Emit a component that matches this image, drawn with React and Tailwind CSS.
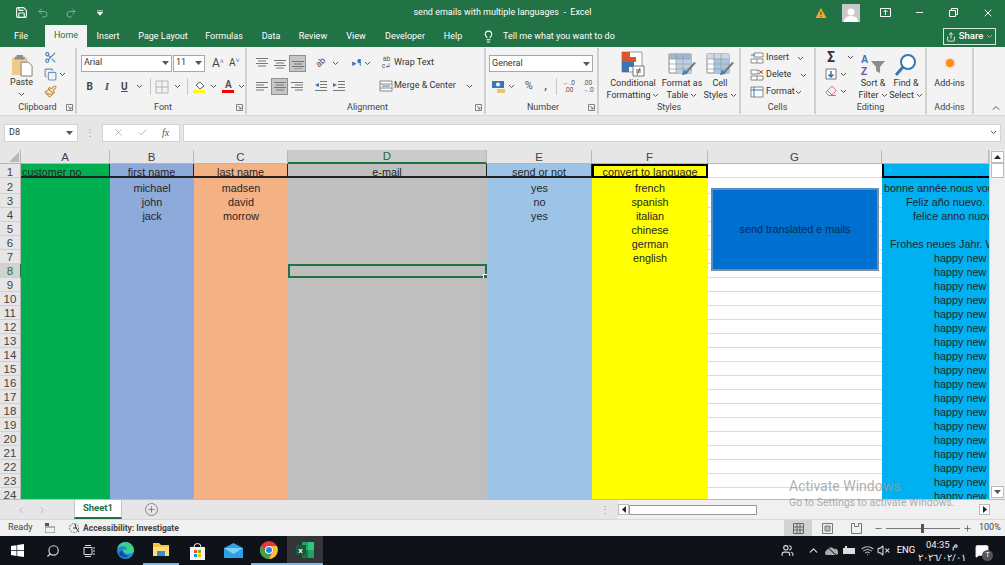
import React from "react";
import { Save, Undo2, Redo2, Scissors, Copy, Paintbrush, Search, ChevronUp, Lightbulb, Share, X, Minus, Check, Plus, Eraser, ChevronLeft, ChevronRight, Wifi, VolumeX, Users, MessageSquare } from "lucide-react";

const Chev = ({ className = "" }) => (
  <svg width="7" height="5" viewBox="0 0 7 5" className={"shrink-0 " + className}><path d="M1 1l2.500 2.500L6 1" fill="none" stroke="#555" strokeWidth="1" /></svg>
);
const Tri = () => <svg width="7" height="4" viewBox="0 0 7 4" className="shrink-0"><path d="M0 0h7L3.500 4z" fill="#555" /></svg>;
const Lines = ({ kind = "c", y = 0 }) => {
  const l = kind === "l" ? [[1, 13], [1, 9], [1, 13], [1, 9]] : kind === "r" ? [[1, 13], [5, 13], [1, 13], [5, 13]] : [[1, 13], [3, 11], [1, 13], [3, 11]];
  return <svg width="14" height="12" viewBox="0 0 14 12">{l.map((p, i) => <path key={i} d={`M${p[0]} ${2.5 + i * 2.5 + y}H${p[1]}`} stroke="#777" strokeWidth="1" />)}</svg>;
};
const Launcher = () => <svg width="7" height="7" viewBox="0 0 7 7" className="shrink-0"><path d="M.5 6.500V.5h6v6zM2 2l3 3M5 3v2H3" fill="none" stroke="#666" strokeWidth=".8" /></svg>;
const Sep = () => <div className="w-px h-[17px] bg-[#c6c6c6] shrink-0" />;

function Label({ children, launcher }) {
  return (
    <div className="h-[13px] shrink-0 relative flex items-center justify-center text-[9px] text-[#444] leading-none">
      {children}
      {launcher && <span className="absolute right-[2px] top-[3px]"><Launcher /></span>}
    </div>
  );
}

const GridIcon = ({ c = "#999" }) => <svg width="14" height="14" viewBox="0 0 14 14"><path d="M1 1h12v12H1zM1 7h12M7 1v12" fill="none" stroke={c} /></svg>;

const TableIcon = ({ head = "#9fb6cf", fill = "#bcd0e6" }) => (
  <svg width="30" height="24" viewBox="0 0 30 24">
    <path d="M2 1h22v19H2z" fill="#fff" stroke="#8a8a8a" />
    <path d="M2 1h22v5H2z" fill={head} />
    <path d="M9 6h15v14H9z" fill={fill} />
    <path d="M2 6h22M2 11h22M2 16h22M9 1v19M16 1v19" stroke="#9a9a9a" strokeWidth=".7" />
    <path d="M27 9l-8 9-2-1-2 5 5-1 1-2 8-9z" fill="#7a7a7a" />
    <path d="M15 22l2-5 3 3z" fill="#3b82c4" />
  </svg>
);

function BigBtn({ icon, l1, l2, className }) {
  return (
    <div className={"flex flex-col items-center shrink-0 " + className}>
      <div className="h-[29px] flex items-end justify-center">{icon}</div>
      <div className="h-[12px] flex items-center text-[9px] leading-none text-[#333] whitespace-nowrap">{l1}</div>
      <div className="h-[12px] flex items-center gap-[2px] text-[9px] leading-none text-[#333] whitespace-nowrap">{l2}<Chev /></div>
    </div>
  );
}

function Ribbon() {
  return (
    <div className="h-[69px] bg-[#f3f3f3] flex border-b border-[#d8d8d8] shrink-0 font-['Roboto',sans-serif]">
      {/* Clipboard */}
      <div className="w-[77px] shrink-0 border-r-2 border-[#cfcfcf] my-[1px] flex flex-col">
        <div className="h-[53px] shrink-0 flex">
          <div className="w-[42px] flex flex-col items-center pl-[1px] pt-[5px]">
            <svg width="22" height="24" viewBox="0 0 24 26">
              <path d="M1 5h17v19H1z" fill="#eecb8c" />
              <path d="M6 2h7v2h2v3H4V4h2z" fill="#8c8c8c" />
              <path d="M11 10h8l4 4v11H11z" fill="#fff" stroke="#777" />
            </svg>
            <span className="text-[9px] leading-none text-[#333] mt-[1px]">Paste</span>
            <Chev className="mt-[5px]" />
          </div>
          <div className="flex flex-col gap-[4px] items-center w-[16px] mt-[3px]">
            <Scissors size={13} color="#4a7fb5" />
            <Copy size={13} color="#6d8fb3" />
            <Paintbrush size={13} color="#c98a2f" />
          </div>
          <Chev className="mt-[24px] ml-[1px]" />
        </div>
        <Label launcher>Clipboard</Label>
      </div>
      {/* Font */}
      <div className="w-[170px] shrink-0 border-r-2 border-[#cfcfcf] my-[1px] flex flex-col pl-[4px]">
        <div className="h-[53px] shrink-0 flex flex-col">
          <div className="flex items-center h-[18px] mt-[6px]">
            <div className="w-[91px] h-[17px] bg-white border border-[#a8a8a8] flex items-center justify-between px-[2px] text-[9px] text-[#333]">Arial<Tri /></div>
            <div className="w-[32px] h-[17px] ml-[1px] bg-white border border-[#a8a8a8] flex items-center justify-between px-[2px] text-[9px] text-[#333]">11<Tri /></div>
            <span className="ml-[7px] text-[12px] leading-none text-[#444]">A<sup className="text-[7px] text-[#3a76b4]">˄</sup></span>
            <span className="ml-[5px] text-[10px] leading-none text-[#444]">A<sup className="text-[7px] text-[#3a76b4]">˅</sup></span>
          </div>
          <div className="flex items-center h-[17px] mt-[6px]">
            <span className="w-[18px] text-center text-[10px] font-bold text-[#444]">B</span>
            <span className="w-[18px] text-center text-[10px] italic font-['Liberation_Serif',serif] font-bold text-[#444]">I</span>
            <span className="w-[18px] text-center text-[10px] underline font-bold text-[#444]">U</span>
            <Chev className="ml-[3px] mr-[7px]" />
            <Sep />
            <div className="ml-[4px] w-[14px]"><GridIcon c="#b5b5b5" /></div>
            <Chev className="ml-[5px] mr-[6px]" />
            <Sep />
            <div className="ml-[3px] w-[16px] flex flex-col items-center">
              <svg width="12" height="9" viewBox="0 0 12 9"><path d="M3 4l4-3 4 4-4 3z" fill="#fff" stroke="#666" /></svg>
              <div className="w-[12px] h-[3px] bg-[#ffff00]" />
            </div>
            <Chev className="ml-[3px] mr-[5px]" />
            <div className="w-[14px] flex flex-col items-center">
              <span className="text-[10px] leading-[9px] font-bold text-[#555]">A</span>
              <div className="w-[12px] h-[3px] mt-[1px] bg-[#ff0000]" />
            </div>
            <Chev className="ml-[3px]" />
          </div>
        </div>
        <Label launcher>Font</Label>
      </div>
      {/* Alignment */}
      <div className="w-[239px] shrink-0 border-r-2 border-[#cfcfcf] my-[1px] flex flex-col pl-[4px]">
        <div className="h-[53px] shrink-0 flex">
          <div className="flex flex-col w-[129px]">
            <div className="flex items-center h-[18px] mt-[6px]">
              <div className="w-[18px] ml-[2px] flex justify-center"><Lines y={-1} /></div>
              <div className="w-[18px] flex justify-center"><Lines y={1} /></div>
              <div className="w-[17px] h-[17px] bg-[#c6c6c6] border border-[#8f8f8f] flex items-center justify-center"><Lines y={2} /></div>
              <div className="w-[22px] ml-[4px] flex justify-center text-[9px] text-[#555] -rotate-45">ab</div>
              <Chev />
              <div className="ml-[13px] text-[9px] text-[#3a76b4] leading-none">▸¶</div>
              <Chev className="ml-[3px]" />
            </div>
            <div className="flex items-center h-[18px] mt-[5px]">
              <div className="w-[18px] ml-[2px] flex justify-center"><Lines kind="l" /></div>
              <div className="w-[17px] h-[17px] bg-[#c6c6c6] border border-[#8f8f8f] flex items-center justify-center"><Lines /></div>
              <div className="w-[18px] flex justify-center"><Lines kind="r" /></div>
              <div className="w-[18px] ml-[6px] flex justify-center">
                <svg width="14" height="12" viewBox="0 0 14 12"><path d="M6 1.500h7M6 4.500h7M6 7.500h7M1 10.500h12" stroke="#777" /><path d="M5 3L1 5l4 2z" fill="#3a76b4" /></svg>
              </div>
              <div className="w-[18px] flex justify-center">
                <svg width="14" height="12" viewBox="0 0 14 12"><path d="M6 1.500h7M6 4.500h7M6 7.500h7M1 10.500h12" stroke="#777" /><path d="M1 3l4 2-4 2z" fill="#3a76b4" /></svg>
              </div>
            </div>
          </div>
          <div className="flex flex-col">
            <div className="flex items-center h-[18px] mt-[6px]">
              <div className="w-[13px] text-[7px] leading-[7px] text-[#555] text-center">ab<br />c<span className="text-[#3a76b4]">↲</span></div>
              <span className="ml-[1px] text-[9px] text-[#333] whitespace-nowrap">Wrap Text</span>
            </div>
            <div className="flex items-center h-[18px] mt-[5px] -ml-[1px]">
              <svg width="14" height="12" viewBox="0 0 14 12" className="shrink-0"><path d="M1 1h12v10H1zM1 4h12M1 8h12" fill="#fff" stroke="#888" /><path d="M3 6h8" stroke="#3a76b4" /></svg>
              <span className="ml-[1px] w-[69px] text-[9px] text-[#333] whitespace-nowrap">Merge &amp; Center</span>
              <Chev className="ml-[3px]" />
            </div>
          </div>
        </div>
        <Label launcher>Alignment</Label>
      </div>
      {/* Number */}
      <div className="w-[113px] shrink-0 border-r-2 border-[#cfcfcf] my-[1px] flex flex-col pl-[3px]">
        <div className="h-[53px] shrink-0 flex flex-col">
          <div className="w-[104px] h-[17px] mt-[7px] bg-white border border-[#a8a8a8] flex items-center justify-between px-[2px] text-[9px] text-[#333]">General<Tri /></div>
          <div className="flex items-center h-[17px] mt-[6px] pl-[3px]">
            <svg width="13" height="14" viewBox="0 0 13 14" className="shrink-0"><path d="M0 1h12v7H0z" fill="#3a76b4" /><circle cx="6" cy="4.500" r="2" fill="#fff" /><path d="M5 9h8v4H5z" fill="#e8c46a" /></svg>
            <Chev className="ml-[3px]" />
            <span className="ml-[5px] w-[18px] text-center text-[11px] text-[#555]">%</span>
            <span className="ml-[1px] w-[14px] text-center text-[11px] font-bold text-[#555]">,</span>
            <div className="ml-[3px]"><Sep /></div>
            <span className="ml-[3px] w-[19px] text-[6.5px] leading-[7px] text-[#555] text-center"><span className="text-[#3a76b4]">←</span>.0<br />.00</span>
            <span className="w-[19px] text-[6.5px] leading-[7px] text-[#555] text-center">.00<br /><span className="text-[#3a76b4]">→</span>.0</span>
          </div>
        </div>
        <Label launcher>Number</Label>
      </div>
      {/* Styles */}
      <div className="w-[142px] shrink-0 border-r-2 border-[#cfcfcf] my-[1px] flex flex-col">
        <div className="h-[53px] shrink-0 flex">
          <BigBtn className="w-[68px]" l1="Conditional" l2="Formatting" icon={
            <svg width="24" height="26" viewBox="0 0 24 26">
              <path d="M1 1h20v20H1z" fill="#fff" stroke="#999" />
              <path d="M1 1h8v5H1z" fill="#d9552c" /><path d="M1 6h14v5H1z" fill="#d9552c" /><path d="M1 11h12v5H1z" fill="#3a76b4" /><path d="M1 16h7v5H1z" fill="#3a76b4" />
              <path d="M12 15h11v10H12z" fill="#fff" stroke="#777" /><path d="M15 19h5M15 21h5M19 17l-3 7" stroke="#444" strokeWidth=".8" />
            </svg>} />
          <BigBtn className="w-[30px]" l1="Format as" l2="Table" icon={<TableIcon />} />
          <BigBtn className="w-[46px]" l1="Cell" l2="Styles" icon={<TableIcon head="#cfd8e3" fill="#a9c6e6" />} />
        </div>
        <Label>Styles</Label>
      </div>
      {/* Cells */}
      <div className="w-[75px] shrink-0 border-r-2 border-[#cfcfcf] my-[1px] flex flex-col pl-[9px]">
        <div className="h-[53px] shrink-0 flex flex-col pt-[3px] gap-[3px]">
          <div className="flex items-center h-[14px]">
            <svg width="14" height="12" viewBox="0 0 14 12" className="shrink-0"><path d="M4 1h9v4H4zM1 7h12v4H1zM7 7v4" fill="#fff" stroke="#888" /><path d="M1 3h4" stroke="#3a76b4" /></svg>
            <span className="ml-[2px] text-[9px] text-[#333] w-[31px]">Insert</span><Chev />
          </div>
          <div className="flex items-center h-[14px]">
            <svg width="14" height="12" viewBox="0 0 14 12" className="shrink-0"><path d="M1 1h7v4H1zM1 7h12v4H1zM7 7v4" fill="#fff" stroke="#888" /><path d="M9 1l4 4M13 1l-4 4" stroke="#d9452c" /></svg>
            <span className="ml-[2px] text-[9px] text-[#333] w-[34px]">Delete</span><Chev />
          </div>
          <div className="flex items-center h-[14px]">
            <svg width="14" height="12" viewBox="0 0 14 12" className="shrink-0"><path d="M1 1h12v10H1z" fill="#fff" stroke="#888" /><path d="M4 1v10M1 4h12" stroke="#3a76b4" /></svg>
            <span className="ml-[2px] text-[9px] text-[#333] w-[29px]">Format</span><Chev />
          </div>
        </div>
        <Label><span className="-ml-[9px]">Cells</span></Label>
      </div>
      {/* Editing */}
      <div className="w-[111px] shrink-0 border-r-2 border-[#cfcfcf] my-[1px] flex flex-col">
        <div className="h-[53px] shrink-0 flex pl-[8px]">
          <div className="flex flex-col w-[33px] pt-[2px] gap-[3px]">
            <div className="flex items-center h-[14px]"><span className="w-[14px] text-center text-[14px] leading-none text-[#333] font-bold">Σ</span><Chev className="ml-[9px]" /></div>
            <div className="flex items-center h-[14px]">
              <svg width="12" height="12" viewBox="0 0 12 12" className="ml-[1px] shrink-0"><path d="M1 1h10v10H1z" fill="#fff" stroke="#777" /><path d="M6 3v6M3.500 6.500L6 9l2.500-2.500" fill="none" stroke="#2b6fb5" strokeWidth="1.500" /></svg>
              <Chev className="ml-[3px]" />
            </div>
            <div className="flex items-center h-[14px]"><Eraser size={12} color="#e0607a" className="ml-[1px]" /><Chev className="ml-[3px]" /></div>
          </div>
          <BigBtn className="w-[32px]" l1="Sort &" l2="Filter" icon={
            <svg width="26" height="24" viewBox="0 0 26 24"><text x="1" y="10" fontSize="10" fontWeight="700" fill="#3a76b4" fontFamily="Liberation Sans">A</text><text x="1" y="22" fontSize="10" fontWeight="700" fill="#7b4aa8" fontFamily="Liberation Sans">Z</text><path d="M11 8h14l-5 6v6l-4-2v-4z" fill="#8c8c8c" /></svg>} />
          <BigBtn className="w-[32px] ml-[1px]" l1="Find &" l2="Select" icon={<svg width="24" height="24" viewBox="0 0 24 24"><circle cx="14" cy="9" r="7" fill="#fff" stroke="#3a76b4" strokeWidth="2" /><path d="M9 14L2 22" stroke="#3a76b4" strokeWidth="3" /></svg>} />
        </div>
        <Label>Editing</Label>
      </div>
      {/* Add-ins */}
      <div className="w-[47px] shrink-0 border-r-2 border-[#cfcfcf] my-[1px] flex flex-col">
        <div className="h-[53px] shrink-0 flex flex-col items-center">
          <div className="h-[29px] flex items-center justify-center"><div className="w-[8px] h-[8px] rounded-full bg-[#ff8c1a] shadow-[0_0_3px_#ffb066]" /></div>
          <span className="text-[9px] leading-none text-[#333] mt-[2px]">Add-ins</span>
        </div>
        <Label>Add-ins</Label>
      </div>
      <div className="flex-1 flex items-end justify-end pr-[3px] pb-[1px]"><ChevronUp size={12} color="#555" /></div>
    </div>
  );
}

const cols = [
  { n: "A", cls: "bg-[#00b050]" },
  { n: "B", cls: "bg-[#8eaadb]" },
  { n: "C", cls: "bg-[#f4b183]" },
  { n: "D", cls: "bg-[#bfbfbf]" },
  { n: "E", cls: "bg-[#9dc3e6]" },
  { n: "F", cls: "bg-[#ffff00]" },
  { n: "G", cls: "bg-white border-b border-[#dcdcdc]" },
  { n: "", cls: "bg-[#00b0f0]" },
];
const data = {
  A: { 1: "customer no" },
  B: { 1: "first name", 2: "michael", 3: "john", 4: "jack" },
  C: { 1: "last name", 2: "madsen", 3: "david", 4: "morrow" },
  D: { 1: "e-mail" },
  E: { 1: "send or not", 2: "yes", 3: "no", 4: "yes" },
  F: { 1: "convert to language", 2: "french", 3: "spanish", 4: "italian", 5: "chinese", 6: "german", 7: "english" },
};
const hText = { 2: ["pl-[2px]", "bonne année.nous vous souhaitons"], 3: ["pl-[24px]", "Feliz año nuevo. Le deseamos"], 4: ["pl-[31px]", "felice anno nuovo. vi auguriamo"], 6: ["pl-[8px]", "Frohes neues Jahr. Wir wünschen"] };
const rows = Array.from({ length: 24 }, (_, i) => i + 1);

function headerBorder(n) {
  if (n === "F") return "border-2 border-black pt-[2px]";
  if (n === "") return "border-l-2 border-b-2 border-black";
  if (n === "G") return "border-b border-[#dcdcdc]";
  return "border-b-2 border-r border-[#222] pt-[4px]";
}
const rowPad = (r) => (r === 1 ? "pt-[4px]" : r === 2 ? "pt-[4px]" : "pt-[2px]");

function Sheet() {
  return (
    <div className="flex-1 min-h-0 flex font-['Liberation_Sans',sans-serif] overflow-hidden bg-white">
      <div className="w-[989px] shrink-0 grid grid-cols-[21px_89px_84px_94px_199px_105px_116px_174px_107px] grid-rows-[14px_14px_16px_repeat(22,14px)] text-[10.8px] leading-none text-[#262626] relative">
        <div className="bg-[#e6e6e6] border-b border-r border-[#b5b5b5] flex items-end justify-end p-[1px]">
          <svg width="10" height="10" viewBox="0 0 10 10"><path d="M10 0v10H0z" fill="#b8b8b8" /></svg>
        </div>
        {["A", "B", "C", "D", "E", "F", "G", ""].map((n) => (
          <div key={"h" + n} className={"flex items-center justify-center pt-[2px] text-[11.5px] border-r border-[#b9b9b9] " + (n === "D" ? "bg-[#cbcbcb] border-b-2 border-b-[#217346] text-[#1d6b40]" : "bg-[#e6e6e6] border-b border-b-[#b5b5b5] text-[#444]")}>{n}</div>
        ))}
        {rows.map((r) => (
          <React.Fragment key={r}>
            <div className={"flex items-center justify-center text-[11.5px] border-b border-[#d0d0d0] border-r " + rowPad(r) + " " + (r === 8 ? "bg-[#d2d2d2] text-[#217346] border-r-[#217346]" : "bg-[#e6e6e6] text-[#444] border-r-[#b5b5b5]")}>{r}</div>
            {cols.map((c) => {
              const isSel = c.n === "D" && r === 8;
              if (c.n === "") {
                const t = hText[r] || (r >= 7 ? ["pl-[52px]", "happy new year"] : null);
                return (
                  <div key={c.n} className={"bg-[#00b0f0] overflow-hidden whitespace-nowrap flex items-center " + rowPad(r) + " " + (r === 1 ? headerBorder("") : "") + " " + (t ? t[0] : "")}>{t ? t[1] : ""}</div>
                );
              }
              const text = data[c.n] && data[c.n][r];
              const left = c.n === "A";
              return (
                <div key={c.n} className={"flex items-center whitespace-nowrap relative " + (r === 1 ? "" : rowPad(r) + " ") + (left ? "justify-start pl-[1px] " : "justify-center ") + (c.n === "G" && r === 1 ? "bg-white border-b border-[#dcdcdc]" : c.cls) + " " + (r === 1 && c.n !== "G" ? headerBorder(c.n) : "") + (isSel ? " border-2 border-[#217346]" : "")}>
                  {text}
                  {isSel && <span className="absolute -right-[3px] -bottom-[3px] w-[5px] h-[5px] bg-[#217346] border border-white" />}
                </div>
              );
            })}
          </React.Fragment>
        ))}
        {/* floating shape button */}
        <div className="absolute left-[711px] top-[38px] w-[168px] h-[83px] bg-[#0070d0] border-2 border-[#5b8fbf] border-b-[#7f8c9a] border-r-[#7f8c9a] flex items-center justify-center text-[10.8px] text-[#0a2a4a]">send translated e mails</div>
      </div>
      <div className="flex-1 bg-[#f0f0f0] border-l border-[#d0d0d0] flex flex-col items-center py-[1px]">
        <div className="w-[13px] h-[12px] bg-white border border-[#bbb] flex items-center justify-center"><svg width="7" height="4" viewBox="0 0 7 4"><path d="M0 4h7L3.500 0z" fill="#222" /></svg></div>
        <div className="w-[13px] h-[15px] bg-white border border-[#bbb]" />
        <div className="flex-1" />
        <div className="w-[13px] h-[12px] bg-white border border-[#bbb] flex items-center justify-center"><Tri /></div>
      </div>
    </div>
  );
}

function Taskbar() {
  return (
    <div className="h-[29px] bg-[#0f1218] flex items-center shrink-0 font-['Roboto',sans-serif] text-white">
      <div className="w-[35px] flex justify-center">
        <svg width="13" height="13" viewBox="0 0 13 13"><path d="M0 2l5.500-.8v5H0zM6.200 1.100L13 0v6.200H6.200zM0 6.900h5.500v5L0 11zM6.200 6.900H13V13l-6.800-1z" fill="#fff" /></svg>
      </div>
      <div className="w-[36px] flex justify-center"><Search size={14} color="#d8d8d8" className="-scale-x-100" /></div>
      <div className="w-[36px] flex justify-center">
        <svg width="13" height="12" viewBox="0 0 13 12"><path d="M1 2.500h8v7H1z" fill="none" stroke="#ddd" /><path d="M2 .5h6M2 11.500h6M11 2v2M11 5v2M11 8v2" stroke="#ddd" /></svg>
      </div>
      <div className="w-[36px] flex justify-center">
        <svg width="19" height="19" viewBox="0 0 20 20"><circle cx="10" cy="10" r="9" fill="#1e88d8" /><path d="M19 11a9 9 0 0 0-18-2c2-4 9-5 11 0H7c0 4 6 6 11 3z" fill="#3ecf8e" /><path d="M7 10c0 4 4 6 7 5-2 3-8 3-11-1 0-2 2-4 4-4z" fill="#0f4c9a" /></svg>
      </div>
      <div className="w-[36px] h-full flex justify-center items-center border-b-2 border-[#7db4e0]">
        <svg width="18" height="15" viewBox="0 0 18 15"><path d="M1 1h6l2 2h8v11H1z" fill="#f4c542" /><path d="M1 5h16v9H1z" fill="#ffdd77" /><path d="M5 9h8v5H5z" fill="#2f8fdd" /></svg>
      </div>
      <div className="w-[36px] flex justify-center">
        <svg width="17" height="18" viewBox="0 0 17 18"><path d="M1 5h15v13H1z" fill="#f4f4f4" /><path d="M5 5a3.500 3.500 0 0 1 7 0" fill="none" stroke="#f4f4f4" /><path d="M5 8h3v3H5z" fill="#f25022" /><path d="M9 8h3v3H9z" fill="#7fba00" /><path d="M5 12h3v3H5z" fill="#00a4ef" /><path d="M9 12h3v3H9z" fill="#ffb900" /></svg>
      </div>
      <div className="w-[36px] flex justify-center">
        <svg width="19" height="15" viewBox="0 0 19 15"><path d="M0 5l9.500-5L19 5v10H0z" fill="#2f9fe8" /><path d="M0 5l9.500 6L19 5" fill="#7fd0f5" /></svg>
      </div>
      <div className="w-[36px] h-full flex justify-center items-center border-b-2 border-[#7db4e0]">
        <svg width="18" height="18" viewBox="0 0 18 18"><circle cx="9" cy="9" r="9" fill="#e53935" /><path d="M9 18A9 9 0 0 1 1.200 4.500L5 9a4 4 0 0 0 6 3z" fill="#43a047" /><path d="M9 5h7.800A9 9 0 0 1 9 18l3-6a4 4 0 0 0-3-7z" fill="#fbc02d" /><circle cx="9" cy="9" r="4" fill="#fff" /><circle cx="9" cy="9" r="3" fill="#1e88e5" /></svg>
      </div>
      <div className="w-[36px] h-full bg-[#333539] flex justify-center items-center border-b-2 border-[#7db4e0]">
        <svg width="18" height="16" viewBox="0 0 18 16"><path d="M6 0h12v16H6z" fill="#21a366" /><path d="M12 0h6v8h-6z" fill="#33c481" /><path d="M6 8h6v8H6z" fill="#107c41" /><path d="M0 3h10v10H0z" fill="#185c37" /><text x="2.200" y="11" fontSize="8" fontWeight="700" fill="#fff" fontFamily="Liberation Sans">x</text></svg>
      </div>
      <div className="flex-1" />
      <Users size={13} color="#ddd" />
      <ChevronUp size={13} color="#ddd" className="ml-[13px]" />
      <div className="ml-[2px] w-[18px] flex justify-center"><svg width="13" height="10" viewBox="0 0 13 10"><path d="M1 9a3 3 0 0 1 1-5 4 4 0 0 1 7-1 3 3 0 0 1 2 6z" fill="#aaa" /><path d="M1 0l11 10" stroke="#111" /></svg></div>
      <div className="w-[18px] flex justify-center"><svg width="13" height="9" viewBox="0 0 13 9"><path d="M0 2h2V0h2v2h8v6H0z" fill="#ddd" /></svg></div>
      <Wifi size={13} color="#bbb" className="ml-[3px]" />
      <VolumeX size={13} color="#ddd" className="ml-[3px]" />
      <span className="ml-[6px] text-[9.5px] w-[20px] text-center">ENG</span>
      <div className="ml-[3px] w-[46px] flex flex-col items-center text-[9.5px] leading-[13px] text-[#eee]">
        <span className="whitespace-nowrap">04:35 م</span>
        <span className="whitespace-nowrap">٢٠٢٦/٠٢/٠١</span>
      </div>
      <div className="ml-[5px] mr-[11px] w-[24px] flex justify-center relative">
        <MessageSquare size={14} color="#fff" fill="#fff" />
        <span className="absolute right-[1px] -bottom-[3px] w-[11px] h-[11px] rounded-full bg-[#555] text-[7px] leading-[11px] text-center">T</span>
      </div>
    </div>
  );
}

export default function App() {
  return (
    <div className="w-[1005px] h-[565px] overflow-hidden flex flex-col relative bg-[#e6e6e6] font-['Roboto',sans-serif]">
      {/* Title */}
      <div className="h-[25px] bg-[#217346] flex items-center text-white shrink-0">
        <Save size={13} className="ml-[15px]" color="#fff" />
        <Undo2 size={12} className="ml-[9px]" color="#7fb195" />
        <Chev className="ml-[2px] opacity-40" />
        <Redo2 size={12} className="ml-[7px]" color="#7fb195" />
        <Chev className="ml-[2px] opacity-40" />
        <svg width="6" height="6" viewBox="0 0 6 6" className="ml-[11px]"><path d="M0 .5h6M0 2h6L3 5.500z" fill="#fff" stroke="#fff" strokeWidth=".5" /></svg>
        <div className="flex-1 text-center text-[9px] ml-[87px] whitespace-nowrap">send emails with multiple languages&nbsp; -&nbsp; Excel</div>
        <svg width="12" height="12" viewBox="0 0 12 12" className="mr-[15px]"><path d="M6 1l5.500 10H.5z" fill="#f3a52c" /><path d="M6 4.500v3.500M6 9v1" stroke="#5a3a10" /></svg>
        <div className="w-[18px] h-[18px] bg-[#c8c8c8] flex items-end justify-center overflow-hidden mr-[20px]">
          <svg width="16" height="16" viewBox="0 0 16 16"><circle cx="8" cy="6" r="3.500" fill="#fff" /><path d="M1 16c0-4 3-6 7-6s7 2 7 6z" fill="#fff" /></svg>
        </div>
        <svg width="11" height="9" viewBox="0 0 11 9" className="mr-[23px]"><path d="M.5.500h10v8H.5z" fill="none" stroke="#fff" /><path d="M5.500 2v5M3.500 4l2-2 2 2" fill="none" stroke="#fff" /></svg>
        <Minus size={11} color="#fff" className="mr-[24px]" />
        <svg width="9" height="9" viewBox="0 0 9 9" className="mr-[24px]"><path d="M.5 2.500h6v6h-6zM2.500 2.500v-2h6v6h-2" fill="none" stroke="#fff" /></svg>
        <X size={12} color="#fff" className="mr-[11px]" />
      </div>
      {/* Tabs */}
      <div className="h-[22px] bg-[#217346] flex items-end text-white text-[9px] shrink-0">
        <div className="w-[45px] h-[21px] flex items-center justify-center pr-[3px]">File</div>
        <div className="w-[42px] h-[22px] bg-[#f3f3f3] text-[#217346] flex items-center justify-center">Home</div>
        <div className="h-[21px] flex items-center">
          <span className="w-[42px] text-center">Insert</span>
          <span className="w-[68px] text-center">Page Layout</span>
          <span className="w-[54px] text-center">Formulas</span>
          <span className="w-[40px] text-center">Data</span>
          <span className="w-[44px] text-center">Review</span>
          <span className="w-[42px] text-center">View</span>
          <span className="w-[56px] text-center">Developer</span>
          <span className="w-[40px] text-center">Help</span>
          <Lightbulb size={13} className="ml-[9px]" color="#fff" />
          <span className="ml-[8px] whitespace-nowrap">Tell me what you want to do</span>
        </div>
        <div className="flex-1" />
        <div className="w-[53px] h-[17px] mb-[2px] mr-[9px] border border-[#d9e8df] flex items-center justify-center gap-[3px] font-medium text-[9.5px]">
          <Share size={10} />Share<Chev className="invert" />
        </div>
      </div>
      <Ribbon />
      {/* Formula bar */}
      <div className="h-[34px] bg-[#e6e6e6] flex items-center pl-[4px] pr-[4px] pb-[1px] shrink-0">
        <div className="w-[74px] h-[18px] bg-white border border-[#d4d4d4] flex items-center justify-between px-[4px] text-[9px] text-[#333]">D8<Tri /></div>
        <div className="w-[24px] flex justify-center text-[#999] text-[10px]">⋮</div>
        <div className="w-[78px] h-[18px] bg-white border border-[#d4d4d4] flex items-center justify-around px-[3px]">
          <X size={11} color="#b0b0b0" /><Check size={11} color="#b0b0b0" /><span className="text-[10px] italic font-['Liberation_Serif',serif] text-[#555]">fx</span>
        </div>
        <div className="flex-1 h-[18px] ml-[3px] bg-white border border-[#d4d4d4] flex items-center justify-end pr-[3px]"><Chev /></div>
      </div>
      <Sheet />
      {/* Sheet tabs */}
      <div className="h-[20px] bg-[#e6e6e6] border-t border-[#bbb] flex items-center shrink-0">
        <ChevronLeft size={10} color="#b0b0b0" className="ml-[16px]" />
        <ChevronRight size={10} color="#b0b0b0" className="ml-[11px]" />
        <div className="ml-[27px] w-[48px] h-[19px] bg-white border-x border-b-2 border-[#c4c4c4] border-b-[#217346] text-[#217346] font-bold text-[9.5px] flex items-center justify-center">Sheet1</div>
        <div className="ml-[23px] w-[13px] h-[13px] rounded-full border border-[#888] flex items-center justify-center"><Plus size={9} color="#666" /></div>
        <div className="ml-[442px] text-[#999] text-[10px]">⋮</div>
        <div className="ml-[8px] h-full flex-1 bg-[#f0f0f0] flex items-center pr-[15px]">
          <div className="w-[11px] h-[11px] bg-white border border-[#bbb] flex items-center justify-center"><svg width="4" height="7" viewBox="0 0 4 7"><path d="M4 0v7L0 3.500z" fill="#222" /></svg></div>
          <div className="w-[128px] h-[10px] bg-white border border-[#999]" />
          <div className="flex-1" />
          <div className="w-[11px] h-[11px] bg-white border border-[#bbb] flex items-center justify-center"><svg width="4" height="7" viewBox="0 0 4 7"><path d="M0 0v7l4-3.500z" fill="#222" /></svg></div>
        </div>
      </div>
      {/* Status */}
      <div className="h-[17px] bg-[#f0f0f0] flex items-center text-[9px] text-[#444] shrink-0 border-t border-[#d8d8d8]">
        <span className="ml-[8px] w-[37px]">Ready</span>
        <svg width="10" height="10" viewBox="0 0 10 10"><path d="M0 4h10v6H0z" fill="none" stroke="#777" /><path d="M0 0h4v3H0z" fill="#555" /></svg>
        <svg width="13" height="12" viewBox="0 0 13 12" className="ml-[13px]"><circle cx="6" cy="6" r="4.500" fill="none" stroke="#777" strokeDasharray="2 1" /><path d="M7 2l1 4 3 4M5 6h4" stroke="#333" fill="none" /></svg>
        <span className="ml-[2px] font-bold text-[8.5px] text-[#444] whitespace-nowrap">Accessibility: Investigate</span>
        <div className="flex-1" />
        <div className="w-[28px] h-full bg-[#d2d2d2] flex items-center justify-center"><svg width="11" height="11" viewBox="0 0 11 11"><path d="M.5.500h10v10H.5zM.5 4h10M.5 7h10M4 .5v10M7 .5v10" fill="none" stroke="#666" /></svg></div>
        <svg width="11" height="11" viewBox="0 0 11 11" className="ml-[10px]"><path d="M.5.500h10v10H.5z" fill="none" stroke="#777" /><path d="M3 3h5v5H3z" fill="#bbb" stroke="#777" /></svg>
        <svg width="11" height="11" viewBox="0 0 11 11" className="ml-[18px]"><path d="M.5 10.500V.500h3v3h4v-3h3v10z" fill="none" stroke="#777" /></svg>
        <Minus size={9} color="#555" className="ml-[12px]" />
        <div className="ml-[3px] w-[74px] h-px bg-[#777] relative"><span className="absolute left-[35px] -top-[4px] w-[3px] h-[9px] bg-[#555]" /></div>
        <Plus size={9} color="#555" className="ml-[3px]" />
        <span className="ml-[7px] mr-[6px] w-[20px] text-[9px]">100%</span>
      </div>
      <Taskbar />
      {/* Activation watermark */}
      <div className="absolute left-[789px] top-[478px] text-[#9a9a9a]/80 pointer-events-none whitespace-nowrap">
        <div className="text-[14px] leading-[17px]">Activate Windows</div>
        <div className="text-[10.5px] leading-[12px] mt-[2px]">Go to Settings to activate Windows.</div>
      </div>
    </div>
  );
}
